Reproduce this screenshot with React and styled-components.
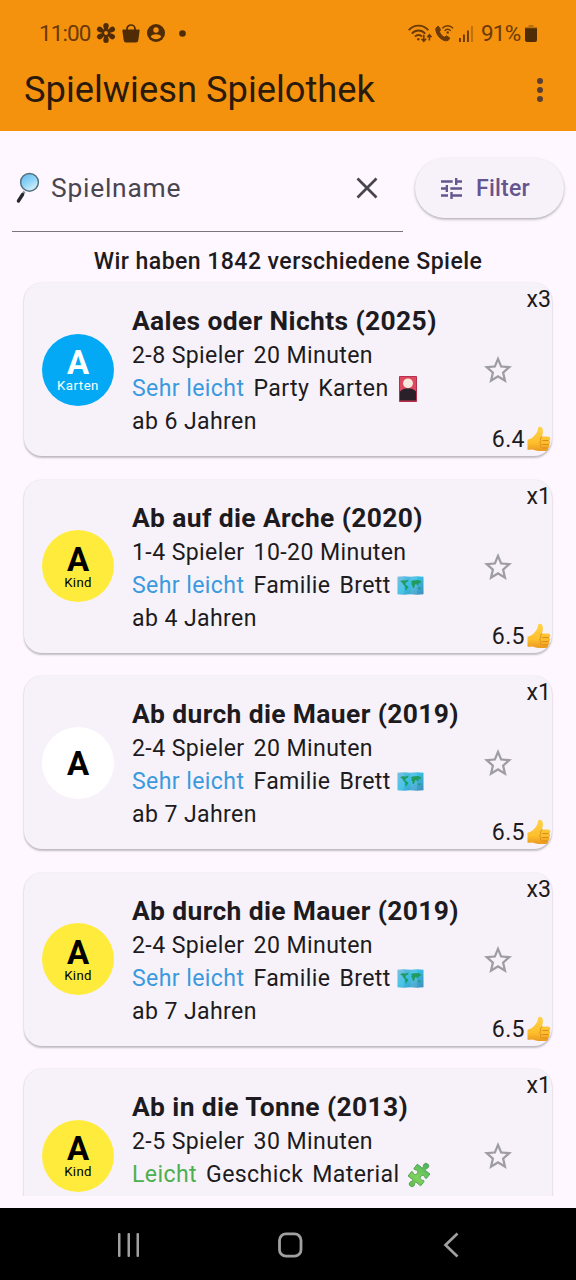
import React from "react";
import styled, { createGlobalStyle } from "styled-components";

const GlobalStyle = createGlobalStyle`
  * { box-sizing: border-box; }
  body { margin: 0; background: #fef7ff; }
  svg { display: block; flex: none; }
`;

const Screen = styled.div`
  width: 576px;
  height: 1280px;
  display: flex;
  flex-direction: column;
  overflow: hidden;
  background: #fef7ff;
  color: #1d1b20;
  font-family: Roboto, "Liberation Sans", sans-serif;
  font-size: 23.1px;
  line-height: 33px;
  letter-spacing: 0.39px;
`;

const Header = styled.header`
  height: 131px;
  flex: none;
  background: #f4920e;
`;

const StatusBar = styled.div`
  height: 48px;
  padding: 18px 39px 0 39px;
  display: flex;
  justify-content: space-between;
  color: #6b3a06;
`;

const StatusGroup = styled.div`
  height: 30px;
  display: flex;
  align-items: center;
`;

const StatusText = styled.span`
  font-size: 22.5px;
  line-height: 30px;
  letter-spacing: ${(p) => p.$spacing};
  width: ${(p) => p.$width}px;
  white-space: nowrap;
`;

const TitleBar = styled.div`
  height: 83px;
  padding: 0 24px;
  display: flex;
  align-items: center;
  justify-content: space-between;
`;

const AppTitle = styled.h1`
  margin: 0;
  font-weight: 400;
  font-size: 36.3px;
  line-height: 46px;
  letter-spacing: 0;
  color: #2a1a0c;
  white-space: nowrap;
`;

const SearchRow = styled.div`
  height: 101px;
  flex: none;
  display: flex;
  align-items: flex-start;
  padding: 14px 12px 0;
  gap: 12px;
`;

const SearchField = styled.div`
  width: 391px;
  height: 87px;
  display: flex;
  align-items: center;
  padding: 0 25px 0 3px;
  border-bottom: 1.5px solid #79747e;
`;

const Placeholder = styled.span`
  flex: 1;
  margin-left: 10px;
  font-size: 26.4px;
  line-height: 36px;
  letter-spacing: 0.75px;
  color: #49454f;
`;

const FilterButton = styled.button`
  width: 149px;
  height: 60px;
  margin-top: 13px;
  padding: 0 0 0 26px;
  display: flex;
  align-items: center;
  gap: 14px;
  border: 0;
  border-radius: 30px;
  background: #f7f2fa;
  box-shadow: 0 1.5px 3px rgba(0, 0, 0, 0.25), 0 1px 2px rgba(0, 0, 0, 0.08);
  color: #65558f;
  font-family: inherit;
  font-weight: 500;
  font-size: 23.1px;
  letter-spacing: 0.2px;
`;

const Count = styled.div`
  height: 39px;
  flex: none;
  padding-top: 13px;
  text-align: center;
  font-weight: 500;
  letter-spacing: 0.42px;
`;

const List = styled.main`
  height: 925px;
  flex: none;
  overflow: hidden;
  padding: 12px 24px 0;
  display: flex;
  flex-direction: column;
  gap: 23.5px;
`;

const Card = styled.article`
  height: 173px;
  flex: none;
  display: flex;
  align-items: center;
  padding-left: 18px;
  border-radius: 18px;
  background: #f7f2fa;
  box-shadow: 0 1.5px 2px rgba(0, 0, 0, 0.23), 0 0 2px rgba(0, 0, 0, 0.08);
`;

const Avatar = styled.div`
  width: 72px;
  height: 72px;
  flex: none;
  border-radius: 50%;
  display: flex;
  flex-direction: column;
  align-items: center;
  justify-content: center;
  background: ${(p) => p.$bg};
  color: ${(p) => p.$color};
`;

const Letter = styled.span`
  font-weight: 700;
  font-size: 33px;
  line-height: 30px;
  letter-spacing: 0;
  padding-top: 2px;
`;

const Kind = styled.span`
  font-size: 13.2px;
  line-height: 15px;
  letter-spacing: ${(p) => (p.$wide ? 0.5 : 0.3)}px;
`;

const Details = styled.div`
  flex: 1;
  min-width: 0;
  margin: 2px 0 0 18px;
  white-space: nowrap;
`;

const GameTitle = styled.h2`
  margin: 0;
  font-weight: 700;
  font-size: 26.4px;
  line-height: 36px;
  letter-spacing: 0.38px;
`;

const Line = styled.div`
  height: 33px;
  display: flex;
  align-items: center;
  gap: 9px;
`;

const Level = styled.span`
  color: ${(p) => p.$color};
`;

const Tag = styled.span`
  margin-right: ${(p) => p.$shift || 0}px;
`;

const Side = styled.div`
  width: 68px;
  height: 173px;
  flex: none;
  display: flex;
  flex-direction: column;
  align-items: flex-start;
  justify-content: space-between;
`;

const Copies = styled.span`
  height: 33px;
  padding: 0 1px 0 0;
  align-self: flex-end;
  letter-spacing: 0;
`;

const Rating = styled.div`
  height: 33px;
  align-self: flex-end;
  display: flex;
  align-items: center;
  letter-spacing: 0.4px;
`;

const NavBar = styled.nav`
  height: 72px;
  flex: none;
  margin-top: auto;
  padding: 2px 108px 0 113px;
  display: flex;
  align-items: center;
  justify-content: space-between;
  background: #000;
`;

const FlowerIcon = () => (
  <svg width="20" height="20" viewBox="-10 -10 20 20" fill="#4f2c05">
    {[0, 60, 120, 180, 240, 300].map((a) => (
      <g key={a} transform={`rotate(${a})`}>
        <path d="M-1.3 -2 L-2.7 -6.5 Q-3 -10 0 -10 Q3 -10 2.7 -6.5 L1.3 -2Z" />
      </g>
    ))}
    <circle r="3.8" />
    <circle r="1.9" fill="#f4920e" />
  </svg>
);

const BagIcon = () => (
  <svg width="18" height="19" viewBox="0 0 18 19">
    <path d="M1.4 5.500h15.200q1.200 0 1 1.200l-1.300 9.600q-.3 2.200-2.400 2.200H4.100q-2.100 0-2.400-2.200L.4 6.700q-.2-1.200 1-1.200z" fill="#4f2c05" />
    <path d="M5 7V5a4 4 0 0 1 8 0v2" fill="none" stroke="#4f2c05" strokeWidth="1.7" />
  </svg>
);

const PersonIcon = () => (
  <svg width="18" height="18" viewBox="0 0 18 18">
    <circle cx="9" cy="9" r="9" fill="#4f2c05" />
    <circle cx="9" cy="6" r="2.7" fill="#f4920e" />
    <path d="M3.7 12.6c1.8-3.1 8.8-3.1 10.6 0-2.2 3.6-8.4 3.6-10.6 0z" fill="#f4920e" />
  </svg>
);

const WifiIcon = () => (
  <svg width="24" height="19" viewBox="0 0 24 19" fill="none" stroke="#6b3a06" strokeWidth="1.9">
    <path d="M.7 6.2C6 .1 15 .1 20.3 6.2" />
    <path d="M3.8 9.6c3.7-4.2 9.7-4.2 13.4 0" />
    <path d="M6.9 12.6c2-2.2 5.2-2.2 7.2 0" />
    <circle cx="10.3" cy="15.2" r="1.2" fill="#6b3a06" stroke="none" />
    <path d="M15.8 10.8v6.2m-2.3-2.3 2.3 2.6 2.3-2.6M21.4 16.4v-5.4m-2.1 2.2 2.1-2.5 2.1 2.5" strokeWidth="1.6" />
  </svg>
);

const CallIcon = () => (
  <svg width="19" height="19" viewBox="0 0 19 19">
    <path
      d="M1 4.2 3.2 2 5.600 5.600 4.500 7.700c1 2.700 2.800 4.600 5 5.500l2-1.400 3.300 2.300c-.8 2.200-2.500 3-4.700 2.600C5.4 15.700 1 10.500.8 5.200z"
      fill="#6b3a06"
      stroke="#6b3a06"
      strokeLinejoin="round"
    />
    <path d="M7.300 4.200c3.200-3.200 7.500-3.200 10.700 0M9.600 6.700c1.900-1.800 4.200-1.800 6.100 0" fill="none" stroke="#6b3a06" strokeWidth="1.500" />
    <circle cx="12.700" cy="8.500" r="1.200" fill="#6b3a06" />
  </svg>
);

const SignalIcon = () => (
  <svg width="15" height="17" viewBox="0 0 15 17" fill="#6b3a06">
    <rect x="0" y="13" width="1.900" height="4" />
    <rect x="4" y="9.500" width="1.900" height="7.500" />
    <rect x="8" y="5.500" width="1.900" height="11.500" />
    <rect x="12" y="1" width="1.900" height="16" opacity=".4" />
  </svg>
);

const BatteryIcon = () => (
  <svg width="12" height="17" viewBox="0 0 12 17">
    <path d="M3.500 2V0h5v2H12v2H0V2z" fill="#a8640a" opacity=".75" />
    <path d="M0 3.300h12V15q0 2-2 2H2q-2 0-2-2z" fill="#4f2c05" />
  </svg>
);

const MoreIcon = () => (
  <svg width="24" height="24" viewBox="0 0 24 24" fill="#5b4032">
    <circle cx="12" cy="3" r="3" />
    <circle cx="12" cy="12" r="3" />
    <circle cx="12" cy="21" r="3" />
  </svg>
);

const MagnifierIcon = () => (
  <svg width="26" height="32" viewBox="0 0 26 32">
    <defs>
      <linearGradient id="lens" x1="0" y1="0" x2=".6" y2="1">
        <stop offset="0" stopColor="#61b4e8" />
        <stop offset=".55" stopColor="#8fd4f7" />
        <stop offset="1" stopColor="#d4f1fc" />
      </linearGradient>
    </defs>
    <path d="M9.500 19.500 7.200 23" stroke="#8b9297" strokeWidth="2.500" />
    <path d="M7.600 22.500 3.400 29" stroke="#26282b" strokeWidth="3.300" strokeLinecap="round" />
    <circle cx="14.500" cy="10.300" r="8.900" fill="url(#lens)" stroke="#56707f" strokeWidth="1.500" />
  </svg>
);

const CloseIcon = () => (
  <svg width="22" height="22" viewBox="0 0 22 22">
    <path d="M1.500 1.500 20.500 20.500M20.500 1.500 1.500 20.500" stroke="#49454f" strokeWidth="2.700" />
  </svg>
);

const TuneIcon = () => (
  <svg width="21" height="21" viewBox="3 3 18 18" fill="#65558f">
    <path d="M3 17v2h6v-2H3zM3 5v2h10V5H3zm10 16v-2h8v-2h-8v-2h-2v6h2zM7 9v2H3v2h4v2h2V9H7zm14 4v-2H11v2h10zm-6-4h2V7h4V5h-4V3h-2v6z" />
  </svg>
);

const StarIcon = () => (
  <svg width="28" height="27" viewBox="2 2 20 19" fill="#9e9da1" preserveAspectRatio="none">
    <path d="M22 9.240l-7.190-.62L12 2 9.190 8.630 2 9.240l5.460 4.730L5.820 21 12 17.270 18.180 21l-1.630-7.030L22 9.240zM12 15.400l-3.760 2.270 1-4.280-3.320-2.880 4.380-.38L12 6.100l1.710 4.040 4.380.38-3.320 2.880 1 4.280L12 15.400z" />
  </svg>
);

const ThumbIcon = () => (
  <svg width="27" height="27" viewBox="0 0 27 27">
    <defs>
      <linearGradient id="thumb" x1="0" y1="0" x2="0" y2="1">
        <stop offset="0" stopColor="#ffd24a" />
        <stop offset=".65" stopColor="#fdbf2d" />
        <stop offset="1" stopColor="#eb991f" />
      </linearGradient>
    </defs>
    <path
      d="M2.500 13.800c3.400-.6 6.200-2.900 8.200-5.700 1.500-2.200 1.900-3.800 2.300-5.700.5-2.300 4-2 4.600.7.600 2.500.2 5.100-.7 7.500h6c2.700 0 3.200 3 1.300 4 1.600 1 1.300 3.200-.1 3.900 1 1.300.4 3-1 3.500.5 1.800-.7 3-2.500 3h-6.500c-3.400 0-5.300-1.700-7.600-1.600-1.400.1-2.500.5-4 .3z"
      fill="url(#thumb)"
    />
    <path d="M17.500 14.600h6.300M17.300 18.500h6.400M17.300 22h5.300M17.300 10.700c-1.700 1-2.300 2.300-1.400 3.900-1.400 1.300-1.200 3 .2 3.900-1.100 1.200-.7 2.700.6 3.500" fill="none" stroke="#d98b1b" strokeWidth="1" />
  </svg>
);

const CardsIcon = () => (
  <svg width="18" height="26" viewBox="0 0 18 26">
    <rect width="18" height="26" rx=".8" fill="#b72e4e" />
    <rect x="1" y="1" width="16" height="23.500" fill="#dd4a5f" />
    <path d="M1 15.500c4-4.300 12-4.300 16 0v9H1z" fill="#2a2029" />
    <circle cx="9" cy="7.300" r="4.900" fill="#f6e9dc" />
  </svg>
);

const MapIcon = () => (
  <svg width="27" height="19" viewBox="0 0 27 19">
    <defs>
      <linearGradient id="sea" x1="0" y1="0" x2="1" y2="1">
        <stop offset="0" stopColor="#6cb6dc" />
        <stop offset=".45" stopColor="#38bfe4" />
        <stop offset="1" stopColor="#3f8dbb" />
      </linearGradient>
    </defs>
    <path d="M.5.8 7 .2l6.500.600 6.500-.600 6.500.600v17.400l-6.500.600-6.500-.600-6.500.600-6.500-.600z" fill="url(#sea)" />
    <path d="M.5.800 7 .200v18.400l-6.500-.600zM13.500.800l6.500-.600v18.400l-6.500-.600z" fill="#fff" opacity=".1" />
    <path
      d="M3 5.600 5.200 4.300l3.600.2 2.700-1-.5 1.900-2 1-.8 1.800 1.600 1.300 1.500 1.100-.8 1.900-1.600 2.400-.7-2.700-.2-2-1.800-1.700-1-1.900zM13.600 5.800l1.800-1.300 2.600-.3 3.300-.3 3.200 1.500-1.200 1.500-1.500.6-.5 1.500-1.200.2-.9-1.300-1 .4-.5 1.900-1.200 2-1-.8-.2-2.200-1.100-.8.1-1.400 1-.6zM21 11.500l2-.3.700 1.400-1.100.8-1.500-.7z"
      fill="#219b62"
    />
  </svg>
);

const PuzzleIcon = () => (
  <svg width="28" height="28" viewBox="0 0 28 28">
    <defs>
      <linearGradient id="piece" x1=".5" y1="0" x2=".5" y2="1">
        <stop offset="0" stopColor="#4cb05c" />
        <stop offset=".6" stopColor="#7ed35d" />
        <stop offset="1" stopColor="#65b84d" />
      </linearGradient>
    </defs>
    <path
      d="M-8-7.500H-2.300C-1-7.500-1.400-8.700-2-9.500C-3.600-12.200-2-14 0-14S3.600-12.200 2-9.500C1.400-8.700 1-7.500 2.300-7.500H8V-2.400C8-1 6.800-1.400 6-1.900C3.600-3.200 2.300-1.600 2.300 0S3.600 3.200 6 1.900C6.800 1.400 8 1 8 2.400V7.500H2.300C1 7.500 1.400 8.700 2 9.500C3.600 12.200 2 14 0 14S-3.600 12.200-2 9.500C-1.400 8.700-1 7.500-2.300 7.500H-8V2.400C-8 1-6.800 1.400-6 1.900C-3.600 3.200-2.300 1.600-2.300 0S-3.600-3.200-6-1.900C-6.800-1.400-8-1-8-2.400Z"
      transform="translate(14 14) rotate(38)"
      fill="url(#piece)"
      stroke="#44974c"
      strokeWidth=".8"
      strokeLinejoin="round"
    />
  </svg>
);

const RecentsIcon = () => (
  <svg width="32" height="26" viewBox="0 0 32 26" fill="#a0a0a0">
    <rect x="5" y="1" width="2.500" height="24" rx="1" />
    <rect x="14.500" y="1" width="2.500" height="24" rx="1" />
    <rect x="23.500" y="1" width="2.500" height="24" rx="1" />
  </svg>
);

const HomeIcon = () => (
  <svg width="26" height="26" viewBox="0 0 26 26">
    <rect x="1.500" y="1.800" width="21.500" height="22.400" rx="6.500" fill="none" stroke="#a0a0a0" strokeWidth="2.800" />
  </svg>
);

const BackIcon = () => (
  <svg width="32" height="26" viewBox="0 0 32 26">
    <path d="M21.500 1.500 9.500 13 21.500 24.500" fill="none" stroke="#a0a0a0" strokeWidth="2.700" />
  </svg>
);

const EMOJI = {
  Karten: { Icon: CardsIcon, shift: 1 },
  Brett: { Icon: MapIcon, shift: -3 },
  Material: { Icon: PuzzleIcon, shift: -4 },
};
const YELLOW = { bg: "#ffeb3b", color: "#000" };
const BLUE = { bg: "#03a9f4", color: "#fff" };
const WHITE = { bg: "#fff", color: "#000" };
const EASIEST = { label: "Sehr leicht", color: "#3b9ade" };
const EASY = { label: "Leicht", color: "#4caf50" };

const GAMES = [
  { title: "Aales oder Nichts (2025)", players: "2-8 Spieler", time: "20 Minuten", level: EASIEST, tags: ["Party", "Karten"], age: "ab 6 Jahren", copies: "x3", score: "6.4", tone: BLUE, kind: "Karten" },
  { title: "Ab auf die Arche (2020)", players: "1-4 Spieler", time: "10-20 Minuten", level: EASIEST, tags: ["Familie", "Brett"], age: "ab 4 Jahren", copies: "x1", score: "6.5", tone: YELLOW, kind: "Kind" },
  { title: "Ab durch die Mauer (2019)", players: "2-4 Spieler", time: "20 Minuten", level: EASIEST, tags: ["Familie", "Brett"], age: "ab 7 Jahren", copies: "x1", score: "6.5", tone: WHITE },
  { title: "Ab durch die Mauer (2019)", players: "2-4 Spieler", time: "20 Minuten", level: EASIEST, tags: ["Familie", "Brett"], age: "ab 7 Jahren", copies: "x3", score: "6.5", tone: YELLOW, kind: "Kind" },
  { title: "Ab in die Tonne (2013)", players: "2-5 Spieler", time: "30 Minuten", level: EASY, tags: ["Geschick", "Material"], copies: "x1", tone: YELLOW, kind: "Kind" },
];

const Spacer = styled.div`
  width: ${(p) => p.$w || 0}px;
  height: ${(p) => p.$h || 0}px;
  flex: none;
`;

function GameCard({ game }) {
  const { Icon, shift } = EMOJI[game.tags[1]];
  return (
    <Card>
      <Avatar $bg={game.tone.bg} $color={game.tone.color}>
        <Letter>A</Letter>
        {game.kind && <Kind $wide={game.kind === "Karten"}>{game.kind}</Kind>}
      </Avatar>
      <Details>
        <GameTitle>{game.title}</GameTitle>
        <Line>
          <span>{game.players}</span>
          <span>{game.time}</span>
        </Line>
        <Line>
          <Level $color={game.level.color}>{game.level.label}</Level>
          <Tag>{game.tags[0]}</Tag>
          <Tag $shift={shift}>{game.tags[1]}</Tag>
          <Icon />
        </Line>
        <Line>{game.age}</Line>
      </Details>
      <Side>
        <Copies>{game.copies}</Copies>
        <StarIcon />
        {game.score ? (
          <Rating>
            {game.score}
            <ThumbIcon />
          </Rating>
        ) : (
          <Spacer $h={33} />
        )}
      </Side>
    </Card>
  );
}

export default function App() {
  return (
    <Screen>
      <GlobalStyle />
      <Header>
        <StatusBar>
          <StatusGroup>
            <StatusText $width={57} $spacing="-0.9px">11:00</StatusText>
            <FlowerIcon />
            <Spacer $w={6} />
            <BagIcon />
            <Spacer $w={7} />
            <PersonIcon />
            <Spacer $w={14} />
            <svg width="7" height="7" viewBox="0 0 7 7">
              <circle cx="3.500" cy="3.500" r="3.300" fill="#4f2c05" />
            </svg>
          </StatusGroup>
          <StatusGroup>
            <WifiIcon />
            <Spacer $w={3} />
            <CallIcon />
            <Spacer $w={5} />
            <SignalIcon />
            <Spacer $w={7} />
            <StatusText $width={44} $spacing="-0.8px">91%</StatusText>
            <BatteryIcon />
          </StatusGroup>
        </StatusBar>
        <TitleBar>
          <AppTitle>Spielwiesn Spielothek</AppTitle>
          <MoreIcon />
        </TitleBar>
      </Header>
      <SearchRow>
        <SearchField>
          <MagnifierIcon />
          <Placeholder>Spielname</Placeholder>
          <CloseIcon />
        </SearchField>
        <FilterButton>
          <TuneIcon />
          Filter
        </FilterButton>
      </SearchRow>
      <Count>Wir haben 1842 verschiedene Spiele</Count>
      <List>
        {GAMES.map((game, i) => (
          <GameCard key={i} game={game} />
        ))}
      </List>
      <NavBar>
        <RecentsIcon />
        <HomeIcon />
        <BackIcon />
      </NavBar>
    </Screen>
  );
}
